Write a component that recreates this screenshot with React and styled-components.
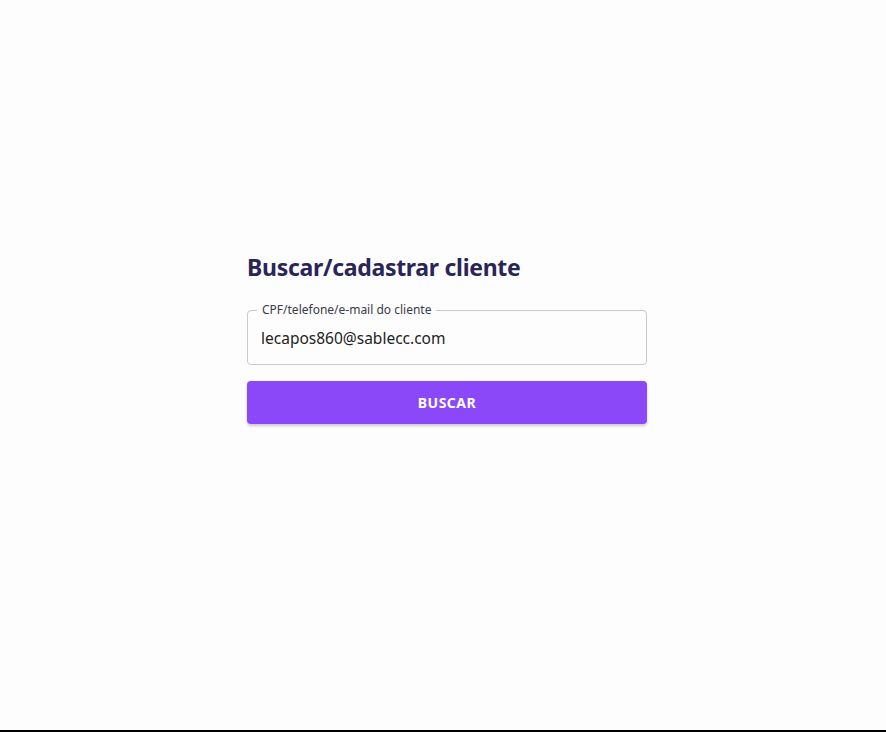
import styled, { createGlobalStyle } from 'styled-components'
import { useState } from 'react'

const Global = createGlobalStyle`
  html, body {
    margin: 0;
    padding: 0;
    background: #fdfdfd;
  }
  * { box-sizing: border-box; }
`

export default function App() {
  const [value, setValue] = useState('lecapos860@sablecc.com')

  return (
    <Page>
      <Global />
      <Form onSubmit={(e) => e.preventDefault()}>
        <Title>Buscar/cadastrar cliente</Title>
        <Field>
          <Label htmlFor="cliente">CPF/telefone/e-mail do cliente</Label>
          <Input id="cliente" value={value} onChange={(e) => setValue(e.target.value)} />
        </Field>
        <Button type="submit">BUSCAR</Button>
      </Form>
    </Page>
  )
}

const Page = styled.div`
  height: 732px;
  display: flex;
  justify-content: center;
  padding: 253px 0 0 8px;
  border-bottom: 2px solid #000;
  font-family: 'Noto Sans', sans-serif;
`

const Form = styled.form`
  width: 400px;
  display: flex;
  flex-direction: column;
`

const Title = styled.h2`
  margin: 0 0 29px;
  font-size: 23px;
  font-weight: 700;
  line-height: 28px;
  letter-spacing: -0.3px;
  color: #2a2558;
`

const Field = styled.div`
  position: relative;
  height: 55px;
  border: 1px solid #c9c9cc;
  border-radius: 4px;
  display: flex;
  align-items: center;
  padding: 0 13px;
`

const Label = styled.label`
  position: absolute;
  top: -8px;
  left: 9px;
  padding: 0 5px;
  background: #fdfdfd;
  font-size: 12px;
  line-height: 14px;
  color: #3a3a4a;
`

const Input = styled.input`
  width: 100%;
  border: none;
  outline: none;
  background: transparent;
  padding: 0;
  font-family: inherit;
  font-size: 15.5px;
  color: #222;
`

const Button = styled.button`
  margin-top: 16px;
  height: 43px;
  border: none;
  border-radius: 4px;
  background: #8b48f8;
  color: #fff;
  font-family: inherit;
  font-size: 14px;
  font-weight: 700;
  letter-spacing: 0.5px;
  box-shadow: 0 2px 3px rgba(0, 0, 0, 0.2);
  cursor: pointer;
`
